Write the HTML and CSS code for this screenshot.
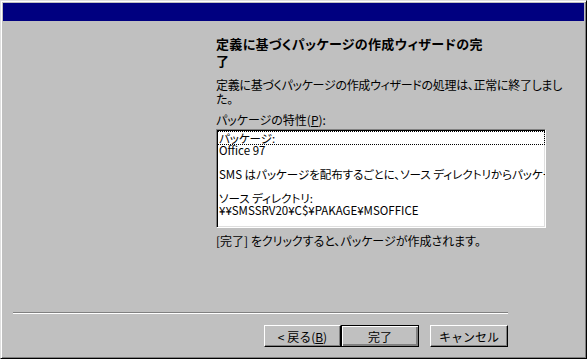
FILE: index.html
```html
<!DOCTYPE html>
<html lang="ja">
<head>
  <title>パッケージの作成ウィザード</title>
  <meta charset="utf-8">
  <link rel="stylesheet" href="styles.css">
</head>
<body>
  <div class="window">
    <div class="titlebar"></div>

    <div class="main">
      <div class="content">
        <h3>定義に基づくパッケージの作成ウィザードの完<br>了</h3>
        <p class="intro">定義に基づくパッケージの作成ウィザードの処理は、正常に終了しまし<br>た。</p>
        <label class="caption">パッケージの特性(<u>P</u>):</label>
        <div class="listbox">
          <div class="row focus">パッケージ:</div>
          <div class="row">Office 97</div>
          <div class="row"></div>
          <div class="row">SMS はパッケージを配布するごとに、ソース ディレクトリからパッケージデータをコピーします。</div>
          <div class="row"></div>
          <div class="row">ソース ディレクトリ:</div>
          <div class="row">¥¥SMSSRV20¥C$¥PAKAGE¥MSOFFICE</div>
        </div>
        <p class="hint">[完了] をクリックすると、パッケージが作成されます。</p>
      </div>
    </div>

    <div class="footer">
      <div class="separator"></div>
      <div class="buttons">
        <button class="btn">&lt; 戻る(<u>B</u>)</button>
        <button class="btn default">完了</button>
        <button class="btn cancel">キャンセル</button>
      </div>
    </div>
  </div>
</body>
</html>
```

FILE: styles.css
```css
*, *::before, *::after {
  margin: 0;
  padding: 0;
  box-sizing: border-box;
}

body {
  margin: 0;
  background-color: #c0c0c0;
  color: #000000;
  font-size: 12px;
  font-family: "Noto Sans CJK JP", sans-serif;
  font-feature-settings: "palt";
}

.window {
  width: 587px;
  height: 359px;
  display: flex;
  flex-direction: column;
  padding: 2px;
  background: #c0c0c0;
  border: 1px solid;
  border-color: #dfdfdf #000000 #000000 #dfdfdf;
  box-shadow: inset 1px 1px #ffffff, inset -1px -1px #808080;
}

.titlebar {
  height: 18px;
  background: #000080;
}

.main {
  flex: 1;
  display: flex;
  padding-top: 14px;
  padding-left: 213px;
}

.content {
  width: 330px;
}

h3 {
  width: 280px;
  font-size: 13px;
  line-height: 17px;
  font-weight: bold;
  letter-spacing: 0.35px;
}

.intro {
  margin-top: 9px;
  line-height: 14px;
  letter-spacing: -0.3px;
  white-space: nowrap;
}

.caption {
  display: block;
  margin-top: 7px;
  line-height: 14px;
}

.listbox {
  height: 99px;
  margin-top: 2px;
  padding: 2px 1px 1px;
  overflow: hidden;
  background: #ffffff;
  border: 1px solid;
  border-color: #808080 #ffffff #ffffff #808080;
  box-shadow: inset 1px 1px #000000, inset -1px -1px #dfdfdf;
}

.row {
  height: 12px;
  font-size: 11.5px;
  line-height: 12px;
  padding-left: 1px;
  white-space: nowrap;
}

.row.focus {
  outline: 1px dotted #000000;
  outline-offset: 0;
}

.hint {
  margin-top: 6px;
  line-height: 14px;
}

.footer {
  width: 495px;
  margin-left: 10px;
  margin-bottom: 9px;
}

.separator {
  border-top: 1px solid #808080;
  border-bottom: 1px solid #ffffff;
}

.buttons {
  display: flex;
  justify-content: flex-end;
  margin-top: 11px;
}

.btn {
  width: 77px;
  height: 22px;
  font-family: inherit;
  font-size: 12px;
  color: #000000;
  background: #c0c0c0;
  border: 1px solid;
  border-color: #ffffff #000000 #000000 #ffffff;
  box-shadow: inset -1px -1px #808080;
}

.btn.default {
  width: 78px;
  border-color: #000000;
  box-shadow: inset 1px 1px #ffffff, inset -2px -2px #808080;
}

.btn.cancel {
  width: 78px;
  margin-left: 11px;
}
```
